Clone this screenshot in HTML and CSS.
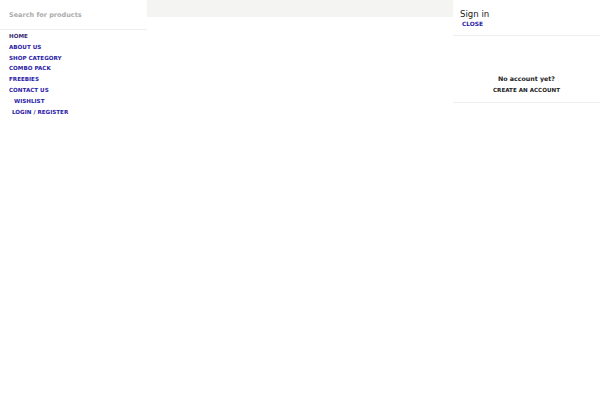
FILE: index.html
```html
<!DOCTYPE html>
<html>
<head>
<meta charset="utf-8">
<link rel="stylesheet" href="styles.css">
</head>
<body>
<div class="page">
  <aside class="side-menu">
    <div class="search">Search for products</div>
    <ul class="menu">
      <li class="active">Home</li>
      <li>About us</li>
      <li>Shop category</li>
      <li>Combo pack</li>
      <li>Freebies</li>
      <li>Contact us</li>
      <li class="indent2">Wishlist</li>
      <li class="indent1">Login / Register</li>
    </ul>
  </aside>
  <main class="center">
    <div class="topbar"></div>
  </main>
  <aside class="signin">
    <div class="signin-head">
      <div class="title">Sign in</div>
      <div class="close">Close</div>
    </div>
    <div class="signin-body">
      <div class="no-account">No account yet?</div>
      <div class="create">Create an account</div>
    </div>
  </aside>
</div>
</body>
</html>
```
FILE: styles.css
```css
html, body { margin: 0; padding: 0; background: #fff; }
body { font-family: "DejaVu Sans", sans-serif; }
.page { display: flex; width: 600px; height: 400px; }
.side-menu { width: 147px; flex: none; }
.search {
  height: 30px; box-sizing: border-box; padding: 10px 0 0 9px;
  font-size: 6.5px; line-height: 10px; font-weight: bold; color: #ababab;
  border-bottom: 1px solid #eeeeee;
}
.menu { list-style: none; margin: 0; padding: 1px 0 0 9px; }
.menu li {
  height: 10.8px; line-height: 10.8px; font-size: 5.6px; font-weight: bold;
  text-transform: uppercase; color: #2a1aa6;
}
.menu li.active { color: #3d2b6e; }
.menu li.indent2 { padding-left: 5px; }
.menu li.indent1 { padding-left: 3px; }
.center { flex: 1; }
.topbar { height: 17px; background: #f4f5f2; }
.signin { width: 147px; flex: none; }
.signin-head {
  height: 36px; box-sizing: border-box; padding: 9px 0 0 7px;
  border-bottom: 1px solid #efefef;
}
.title { font-size: 8.6px; color: #222; line-height: 11px; }
.close {
  font-size: 5.9px; font-weight: bold; text-transform: uppercase;
  color: #2a1aa6; padding-left: 2px; line-height: 8px;
}
.signin-body {
  height: 67px; box-sizing: border-box; padding-top: 38px; text-align: center;
  border-bottom: 1px solid #efefef;
}
.no-account { font-size: 6.3px; font-weight: bold; color: #222; line-height: 10px; }
.create {
  font-size: 5.6px; font-weight: bold; text-transform: uppercase; color: #222;
  line-height: 12px;
}
```
